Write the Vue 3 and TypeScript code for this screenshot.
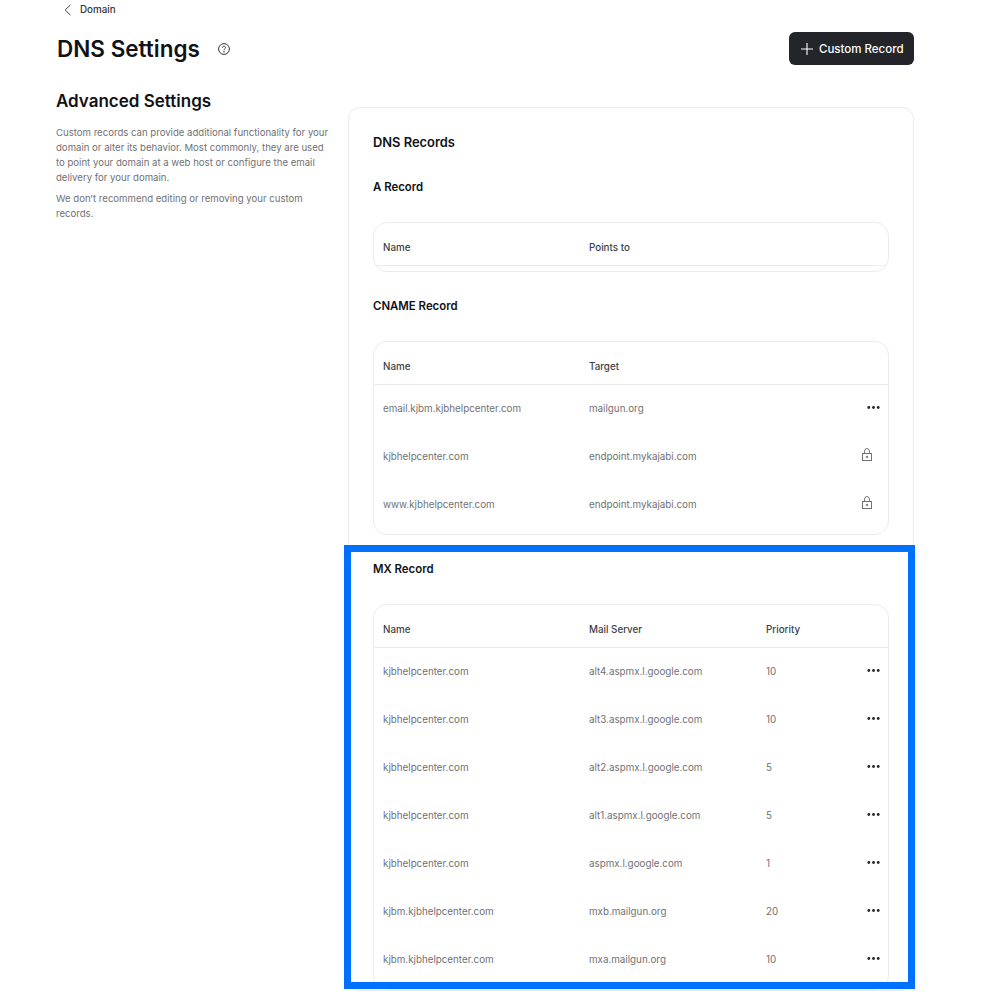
<script setup lang="ts">
interface RecordTable {
  title: string
  columns: string[]
  rows: { cells: string[]; action: 'more' | 'lock' }[]
}

const more = 'more' as const
const lock = 'lock' as const

const tables: RecordTable[] = [
  { title: 'A Record', columns: ['Name', 'Points to'], rows: [] },
  {
    title: 'CNAME Record',
    columns: ['Name', 'Target'],
    rows: [
      { cells: ['email.kjbm.kjbhelpcenter.com', 'mailgun.org'], action: more },
      { cells: ['kjbhelpcenter.com', 'endpoint.mykajabi.com'], action: lock },
      { cells: ['www.kjbhelpcenter.com', 'endpoint.mykajabi.com'], action: lock }
    ]
  },
  {
    title: 'MX Record',
    columns: ['Name', 'Mail Server', 'Priority'],
    rows: [
      { cells: ['kjbhelpcenter.com', 'alt4.aspmx.l.google.com', '10'], action: more },
      { cells: ['kjbhelpcenter.com', 'alt3.aspmx.l.google.com', '10'], action: more },
      { cells: ['kjbhelpcenter.com', 'alt2.aspmx.l.google.com', '5'], action: more },
      { cells: ['kjbhelpcenter.com', 'alt1.aspmx.l.google.com', '5'], action: more },
      { cells: ['kjbhelpcenter.com', 'aspmx.l.google.com', '1'], action: more },
      { cells: ['kjbm.kjbhelpcenter.com', 'mxb.mailgun.org', '20'], action: more },
      { cells: ['kjbm.kjbhelpcenter.com', 'mxa.mailgun.org', '10'], action: more }
    ]
  }
]
</script>

<template>
  <div class="page">
    <a class="back">
      <svg width="8" height="12" viewBox="0 0 8 12" fill="none" stroke="#3c3f45" stroke-width="1">
        <path d="M6.5 .8 1.2 6l5.3 5.2" />
      </svg>
      <span>Domain</span>
    </a>

    <header class="header">
      <div class="title">
        <h1>DNS Settings</h1>
        <svg width="12" height="12" viewBox="0 0 12 12" fill="none" stroke="#33363b" stroke-width="1">
          <circle cx="6" cy="6" r="5.4" />
          <path d="M4.4 4.8c0-1 .7-1.6 1.6-1.6s1.6.6 1.6 1.5c0 1.2-1.6 1.2-1.6 2.5" />
          <circle cx="6" cy="8.8" r=".35" />
        </svg>
      </div>
      <button class="add">
        <svg width="12" height="12" viewBox="0 0 12 12" stroke="#fff" stroke-width="1.1">
          <path d="M6 0v12M0 6h12" />
        </svg>
        Custom Record
      </button>
    </header>

    <div class="columns">
      <aside class="intro">
        <h2>Advanced Settings</h2>
        <p>Custom records can provide additional functionality for your domain or alter its behavior. Most commonly, they are used to point your domain at a web host or configure the email delivery for your domain.</p>
        <p>We don’t recommend editing or removing your custom records.</p>
      </aside>

      <main class="card">
        <h3 class="card-title">DNS Records</h3>
        <section v-for="table in tables" :key="table.title" class="section">
          <h4>{{ table.title }}</h4>
          <div class="table">
            <div class="row head">
              <span v-for="col in table.columns" :key="col" class="cell">{{ col }}</span>
            </div>
            <div v-for="(row, i) in table.rows" :key="i" class="row">
              <span v-for="(cell, j) in row.cells" :key="j" class="cell">{{ cell }}</span>
              <span class="action">
                <svg v-if="row.action === 'more'" class="dots" width="13" height="4" viewBox="0 0 13 4" fill="#23252a">
                  <circle cx="1.8" cy="2" r="1.4" />
                  <circle cx="6.5" cy="2" r="1.4" />
                  <circle cx="11.2" cy="2" r="1.4" />
                </svg>
                <svg v-else class="lock" width="10" height="13" viewBox="0 0 10 13" fill="none" stroke="#6f7278" stroke-width="1">
                  <rect x=".5" y="5.5" width="9" height="7" />
                  <path d="M2.6 5.5V3a2.4 2.4 0 0 1 4.8 0v2.5" />
                  <circle cx="5" cy="9" r="1.3" fill="#8a8d92" stroke="none" />
                </svg>
              </span>
            </div>
          </div>
        </section>
      </main>
    </div>

    <div class="highlight"></div>
  </div>
</template>

<style scoped>
.page {
  position: relative;
  box-sizing: border-box;
  width: 982px;
  height: 1004px;
  overflow: hidden;
  padding: 0 68px 0 56px;
  background: #fff;
  font-family: Inter, "Liberation Sans", sans-serif;
  color: #111215;
}
.back {
  display: flex;
  align-items: center;
  gap: 8px;
  height: 19px;
  margin-left: 8px;
  font-size: 9.8px;
  font-weight: 500;
  color: #33363b;
}
.header {
  display: flex;
  justify-content: space-between;
  align-items: center;
  margin-top: 13px;
  height: 33px;
}
.title {
  display: flex;
  align-items: center;
  gap: 18px;
  margin-left: 1px;
}
h1 {
  margin: 0;
  font-size: 22.5px;
  font-weight: 600;
}
.add {
  display: flex;
  align-items: center;
  gap: 6px;
  width: 125px;
  height: 33px;
  box-sizing: border-box;
  padding: 0 0 0 12px;
  border: 0;
  border-radius: 6px;
  background: #23252a;
  color: #fff;
  font: 500 11.5px Inter, "Liberation Sans", sans-serif;
}
.columns {
  display: flex;
  gap: 18px;
  align-items: flex-start;
  margin-top: 42px;
}
.intro {
  flex: 0 0 274px;
  margin-top: -18px;
}
h2 {
  margin: 0 0 12px;
  font-size: 17px;
  font-weight: 600;
  line-height: 24px;
}
.intro p {
  margin: 0 0 6px;
  font-size: 9.6px;
  line-height: 15px;
  color: #707174;
}
.card {
  flex: 1;
  min-width: 0;
  box-sizing: border-box;
  padding: 24px 24px 0;
  border: 1px solid #ececee;
  border-radius: 12px;
}
.card-title {
  margin: 0;
  height: 22px;
  line-height: 21px;
  font-size: 12.9px;
  font-weight: 600;
}
.section h4 {
  margin: 0;
  font-size: 11.4px;
  font-weight: 600;
  line-height: 20px;
}
.section {
  margin-top: 23px;
}
.section + .section {
  margin-top: 24px;
}
.table {
  margin-top: 25px;
  padding-bottom: 5px;
  border: 1px solid #ececee;
  border-radius: 14px;
  overflow: hidden;
}
.row {
  position: relative;
  display: grid;
  grid-template-columns: 206px 177px 1fr;
  align-items: center;
  box-sizing: border-box;
  height: 48px;
  padding: 0 0 2px 9px;
  font-size: 9.8px;
  color: #707174;
}
.row.head {
  height: 43px;
  padding: 6px 0 0 9px;
  border-bottom: 1px solid #ececee;
  font-weight: 500;
  color: #3c3f45;
}
.action {
  position: absolute;
  right: 8px;
  top: 50%;
  display: flex;
  transform: translateY(-50%);
}
.dots {
  margin-top: -3px;
}
.lock {
  margin-right: 8px;
  margin-top: -5px;
}
.highlight {
  position: absolute;
  left: 344px;
  top: 545px;
  width: 571px;
  height: 444px;
  box-sizing: border-box;
  border: 7px solid #0070ff;
}
</style>

<style>
body {
  margin: 0;
  background: #fff;
}
</style>
